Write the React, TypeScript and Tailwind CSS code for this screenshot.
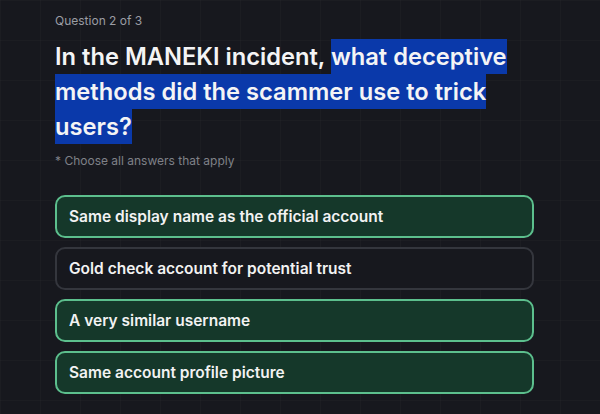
const options = [
  { text: 'Same display name as the official account', selected: true },
  { text: 'Gold check account for potential trust', selected: false },
  { text: 'A very similar username', selected: true },
  { text: 'Same account profile picture', selected: true },
];

export default function App() {
  return (
    <div
      className="min-h-[414px] w-full bg-[#17181e] bg-[linear-gradient(rgba(255,255,255,0.018)_1px,transparent_1px),linear-gradient(90deg,rgba(255,255,255,0.018)_1px,transparent_1px)] bg-[size:40px_40px] font-['Inter',sans-serif]"
    >
      <div className="ml-[55px] w-[479px] pt-[13px]">
        <p className="text-[12px] leading-[16px] text-[#9b9da4]">Question 2 of 3</p>
        <h1 className="mt-[10px] text-[23.7px] font-semibold leading-[35px] text-[#f4f4f5]">
          In the MANEKI incident,{' '}
          <span className="bg-[#0a39aa] py-[3px] [box-decoration-break:clone]">
            what deceptive methods did the scammer use to trick users?
          </span>
        </h1>
        <p className="mt-[9px] text-[12px] leading-[16px] text-[#7f8188]">* Choose all answers that apply</p>
        <div className="mt-[26px] flex flex-col gap-[9px]">
          {options.map((opt) => (
            <div
              key={opt.text}
              className={
                opt.selected
                  ? 'flex h-[43px] items-center rounded-[10px] border-2 border-[#5cbf8d] bg-[#15382a] px-[12px]'
                  : 'flex h-[43px] items-center rounded-[10px] border-2 border-[#34363d] bg-[#17181e] px-[12px]'
              }
            >
              <span className="text-[15.5px] font-semibold text-[#f2f2f2]">{opt.text}</span>
            </div>
          ))}
        </div>
      </div>
    </div>
  );
}
